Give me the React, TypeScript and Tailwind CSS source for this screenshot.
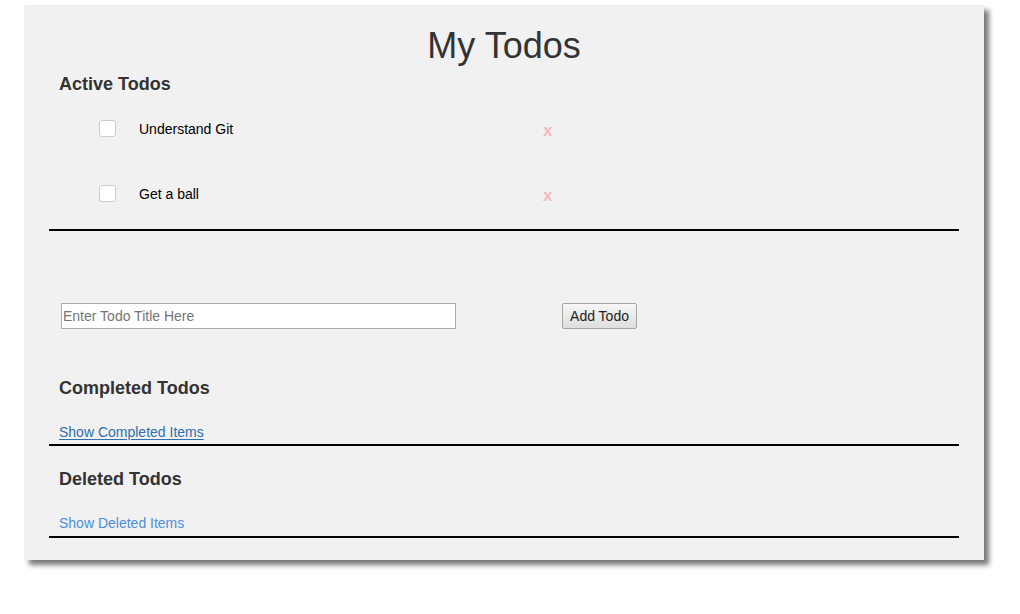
import React from "react"

const todos = ["Understand Git", "Get a ball"]

const App: React.FC = () => (
  <div className="min-h-screen bg-white pt-[5px] pl-[24px] font-['Liberation_Sans',Arial,sans-serif]">
    <div className="h-[555px] w-[960px] bg-[#f1f1f1] pt-[21px] shadow-[5px_5px_5px_#7a7a7a]">
      <h1 className="h-[40px] text-center text-[36px] leading-[40px] text-[#333]">My Todos</h1>
      <div className="mx-[25px]">
        <h4 className="mt-[8px] pl-[10px] text-[18px] font-bold leading-[20px] text-[#333]">Active Todos</h4>
        <ul className="mt-[3px]">
          {todos.map((t) => (
            <li key={t} className="flex h-[65px] items-center text-[14px] text-black">
              <span className="ml-[50px] -mt-[2px] size-[17px] rounded-[3px] border border-[#cdcdcd] bg-white" />
              <span className="ml-[23px] w-[404px]">{t}</span>
              <span className="mt-[3px] text-[17px] font-bold text-[#f6b9b9]">x</span>
            </li>
          ))}
        </ul>
        <div className="mt-[2px] border-t-2 border-black" />
        <div className="mt-[72px] flex h-[26px] items-center">
          <input
            className="ml-[12px] h-[26px] w-[395px] border border-[#a9a9a9] bg-white px-[1px] text-[14px] text-black outline-none placeholder:text-[#757575]"
            placeholder="Enter Todo Title Here"
          />
          <button className="ml-[106px] h-[26px] w-[75px] rounded-[2px] border border-[#a6a6a6] bg-gradient-to-b from-[#f6f6f6] to-[#dedede] text-[14px] text-[#222]">
            Add Todo
          </button>
        </div>
        <h4 className="mt-[49px] pl-[10px] text-[18px] font-bold leading-[20px] text-[#333]">Completed Todos</h4>
        <a className="mt-[24px] ml-[10px] block w-fit text-[14px] leading-[20px] text-[#2f6fad] underline underline-offset-[2px]" href="#">
          Show Completed Items
        </a>
        <div className="mt-[2px] border-t-2 border-black" />
        <h4 className="mt-[23px] pl-[10px] text-[18px] font-bold leading-[20px] text-[#333]">Deleted Todos</h4>
        <a className="mt-[24px] ml-[10px] block w-fit text-[14px] leading-[20px] text-[#4a8fd8]" href="#">
          Show Deleted Items
        </a>
        <div className="mt-[3px] border-t-2 border-black" />
      </div>
    </div>
  </div>
)

export default App
